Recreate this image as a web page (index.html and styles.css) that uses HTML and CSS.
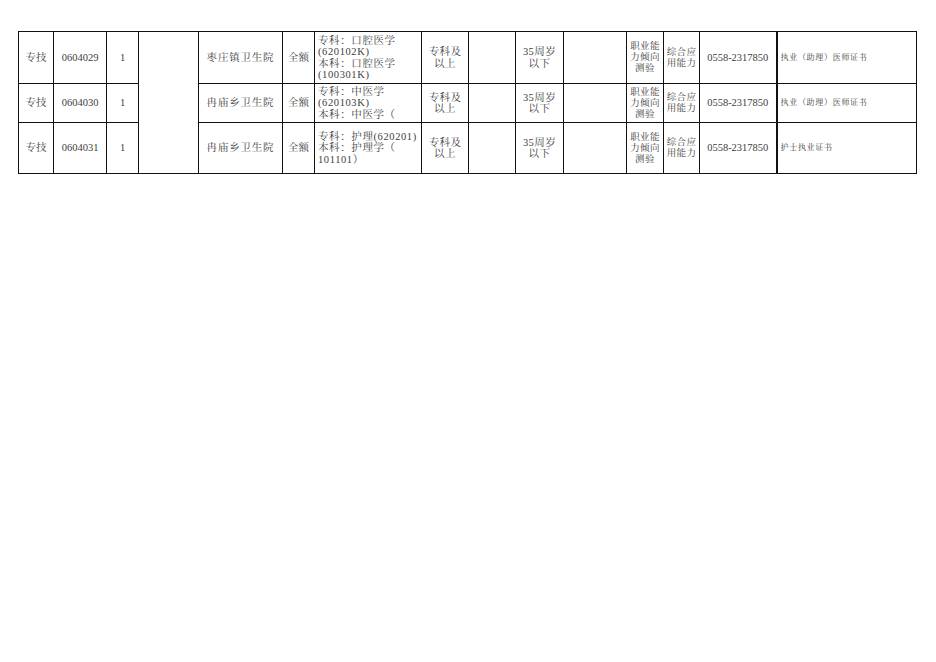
FILE: index.html
```html
<!DOCTYPE html>
<html lang="zh">
<head>
<meta charset="utf-8">
<title>岗位表</title>
<link rel="stylesheet" href="styles.css">
</head>
<body>
<table class="sheet">
  <colgroup>
    <col class="c1"><col class="c2"><col class="c3"><col class="c4"><col class="c5">
    <col class="c6"><col class="c7"><col class="c8"><col class="c9"><col class="c10">
    <col class="c11"><col class="c12"><col class="c13"><col class="c14"><col class="c15">
  </colgroup>
  <tbody>
    <tr class="r1">
      <td>专技</td>
      <td>0604029</td>
      <td>1</td>
      <td rowspan="3"></td>
      <td class="sp">枣庄镇卫生院</td>
      <td>全额</td>
      <td class="major">专科：口腔医学<br>(620102K)<br>本科：口腔医学<br>(100301K)</td>
      <td class="mid">专科及<br>以上</td>
      <td></td>
      <td class="mid">35周岁<br>以下</td>
      <td></td>
      <td class="narrow">职业能<br>力倾向<br>测验</td>
      <td class="narrow">综合应<br>用能力</td>
      <td>0558-2317850</td>
      <td class="note">执业（助理）医师证书</td>
    </tr>
    <tr class="r2">
      <td>专技</td>
      <td>0604030</td>
      <td>1</td>
      <td class="sp">冉庙乡卫生院</td>
      <td>全额</td>
      <td class="major">专科：中医学<br>(620103K)<br>本科：中医学（</td>
      <td class="mid">专科及<br>以上</td>
      <td></td>
      <td class="mid">35周岁<br>以下</td>
      <td></td>
      <td class="narrow">职业能<br>力倾向<br>测验</td>
      <td class="narrow">综合应<br>用能力</td>
      <td>0558-2317850</td>
      <td class="note">执业（助理）医师证书</td>
    </tr>
    <tr class="r3">
      <td>专技</td>
      <td>0604031</td>
      <td>1</td>
      <td class="sp">冉庙乡卫生院</td>
      <td>全额</td>
      <td class="major">专科：护理(620201)<br>本科：护理学（<br>101101）</td>
      <td class="mid">专科及<br>以上</td>
      <td></td>
      <td class="mid">35周岁<br>以下</td>
      <td></td>
      <td class="narrow">职业能<br>力倾向<br>测验</td>
      <td class="narrow">综合应<br>用能力</td>
      <td>0558-2317850</td>
      <td class="note">护士执业证书</td>
    </tr>
  </tbody>
</table>
</body>
</html>
```

FILE: styles.css
```css
html, body {
  margin: 0;
  padding: 0;
  background: #fff;
}
body {
  padding: 31px 0 0 18px;
  font-family: "Liberation Serif", "Noto Serif CJK SC", "Noto Sans CJK SC", serif;
  font-size: 10.5px;
  color: #404040;
}
.sheet {
  border-collapse: collapse;
  table-layout: fixed;
  width: 899px;
}
.c1 { width: 35px; }
.c2 { width: 53px; }
.c3 { width: 32px; }
.c4 { width: 60px; }
.c5 { width: 84px; }
.c6 { width: 32px; }
.c7 { width: 107px; }
.c8 { width: 47px; }
.c9 { width: 47px; }
.c10 { width: 48px; }
.c11 { width: 63px; }
.c12 { width: 37px; }
.c13 { width: 36px; }
.c14 { width: 77px; }
.c15 { width: 140px; }
.sheet td {
  border: 1px solid #111;
  padding: 0;
  text-align: center;
  vertical-align: middle;
  line-height: 11.5px;
  overflow: hidden;
  white-space: nowrap;
}
.r1 td { height: 51px; }
.r2 td { height: 38px; }
.r3 td { height: 50px; }
.sheet td.sp { letter-spacing: 0.8px; }
.sheet td.mid { letter-spacing: 0.4px; }
.sheet td.major {
  text-align: left;
  padding-left: 3px;
  letter-spacing: 0.6px;
  line-height: 11.5px;
}
.sheet td.narrow {
  font-size: 9.5px;
  letter-spacing: 0.4px;
  line-height: 11px;
}
.sheet td.note {
  text-align: left;
  padding-left: 3px;
  font-size: 8px;
  letter-spacing: 0.7px;
  border-left: 2px solid #111;
}
```
